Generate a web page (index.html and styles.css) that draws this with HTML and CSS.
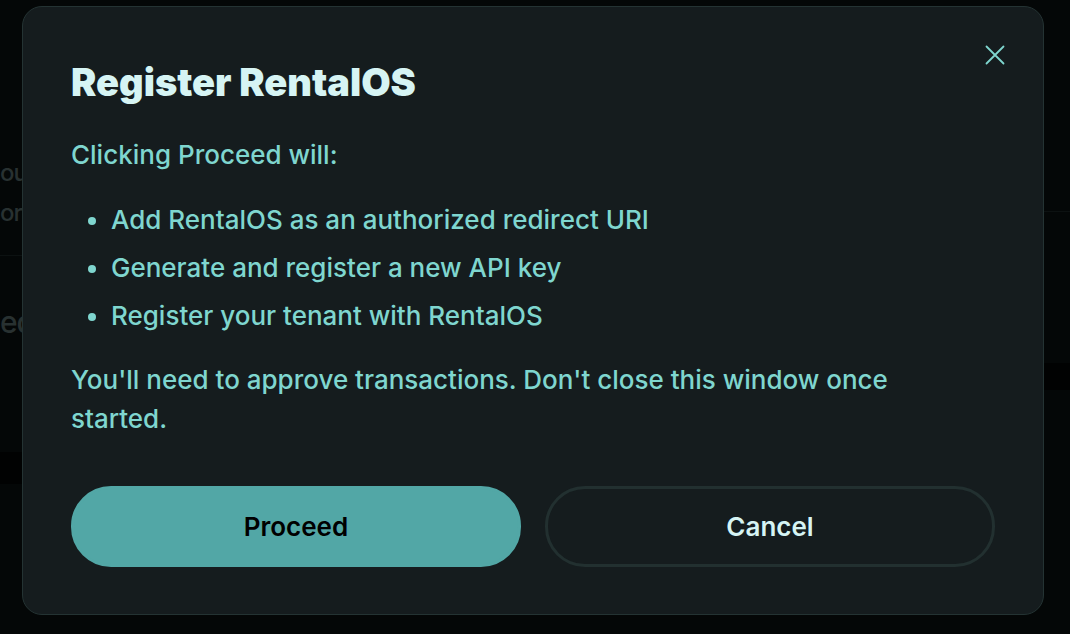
FILE: index.html
```html
<!DOCTYPE html>
<html lang="en">
<head>
    <meta charset="UTF-8">
    <meta name="viewport" content="width=device-width, initial-scale=1.0">
    <title>Register RentalOS</title>
    <link rel="stylesheet" href="styles.css">
</head>
<body>
    <div class="page">
        <div class="page-main">
            <div class="page-head">
                <p class="dim-text">ou</p>
                <p class="dim-text">or</p>
            </div>
            <div class="page-row">
                <p class="dim-text">ed</p>
            </div>
            <div class="page-band"></div>
        </div>
        <div class="page-side">
            <div class="side-head"></div>
            <div class="side-row"></div>
            <div class="page-band side-band"></div>
        </div>
    </div>

    <div class="overlay">
        <div class="modal" role="dialog" aria-labelledby="modalTitle">
            <button class="close-button" aria-label="Close">
                <svg width="20" height="20" viewBox="0 0 20 20" fill="none">
                    <path d="M1.5 1.5 L18.5 18.5 M18.5 1.5 L1.5 18.5" stroke="currentColor" stroke-width="1.8" stroke-linecap="round"/>
                </svg>
            </button>
            <h2 class="modal-title" id="modalTitle">Register RentalOS</h2>
            <p class="modal-text">Clicking Proceed will:</p>
            <ul class="step-list">
                <li>Add RentalOS as an authorized redirect URI</li>
                <li>Generate and register a new API key</li>
                <li>Register your tenant with RentalOS</li>
            </ul>
            <p class="modal-text note-text">You'll need to approve transactions. Don't close this window once started.</p>
            <div class="modal-actions">
                <button class="modal-button proceed-button">Proceed</button>
                <button class="modal-button cancel-button">Cancel</button>
            </div>
        </div>
    </div>
</body>
</html>
```

FILE: styles.css
```css
    * {
        box-sizing: border-box;
    }
    body {
        margin: 0;
        width: 1070px;
        height: 634px;
        overflow: hidden;
        background-color: #040707;
        font-family: Inter, 'Noto Sans', sans-serif;
        position: relative;
    }
    p {
        margin: 0;
    }

    /* dimmed page behind the dialog */
    .page {
        display: grid;
        grid-template-columns: 1fr 300px;
        height: 100%;
    }
    .page-head {
        height: 256px;
        padding-top: 153px;
        border-bottom: 1px solid #0c1111;
    }
    .page-row {
        height: 196px;
        padding-top: 46px;
    }
    .page-band {
        height: 32px;
        background-color: #010202;
    }
    .side-head {
        height: 212px;
        border-bottom: 1px solid #0c1111;
    }
    .side-row {
        height: 151px;
    }
    .side-band {
        height: 27px;
    }
    .dim-text {
        color: #283131;
        font-size: 24px;
        font-weight: 500;
        line-height: 40px;
        letter-spacing: -1px;
    }
    .page-row .dim-text {
        font-size: 30px;
    }

    /* dialog */
    .overlay {
        position: absolute;
        inset: 0;
        padding: 6px 26px 19px 22px;
    }
    .modal {
        position: relative;
        height: 100%;
        background-color: #151c1e;
        border: 1px solid #243333;
        border-radius: 20px;
        padding: 52px 48px 47px 48px;
        display: flex;
        flex-direction: column;
    }
    .close-button {
        position: absolute;
        top: 38px;
        right: 38px;
        width: 20px;
        height: 20px;
        padding: 0;
        border: none;
        background: none;
        color: #7fd6cf;
        cursor: pointer;
        display: flex;
    }
    .modal-title {
        margin: 0 0 30px 0;
        font-size: 38px;
        font-weight: 900;
        line-height: 46px;
        color: #d6f4f4;
    }
    .modal-text {
        color: #7fd6cf;
        font-size: 26px;
        font-weight: 500;
        line-height: 39px;
    }
    .note-text {
        max-width: 880px;
    }
    .step-list {
        margin: 26px 0 25px 0;
        padding-left: 40px;
        color: #7fd6cf;
        font-size: 26px;
        font-weight: 500;
        line-height: 39px;
    }
    .step-list li + li {
        margin-top: 9px;
    }
    .modal-actions {
        margin-top: auto;
        display: grid;
        grid-template-columns: 1fr 1fr;
        gap: 24px;
    }
    .modal-button {
        height: 81px;
        border-radius: 40px;
        font-family: Inter, 'Noto Sans', sans-serif;
        font-size: 26px;
        font-weight: 600;
        cursor: pointer;
    }
    .proceed-button {
        background-color: #52a7a6;
        border: 3px solid #52a7a6;
        color: #000000;
    }
    .cancel-button {
        background-color: #151c1e;
        border: 3px solid #223030;
        color: #d6f4f4;
    }
```
